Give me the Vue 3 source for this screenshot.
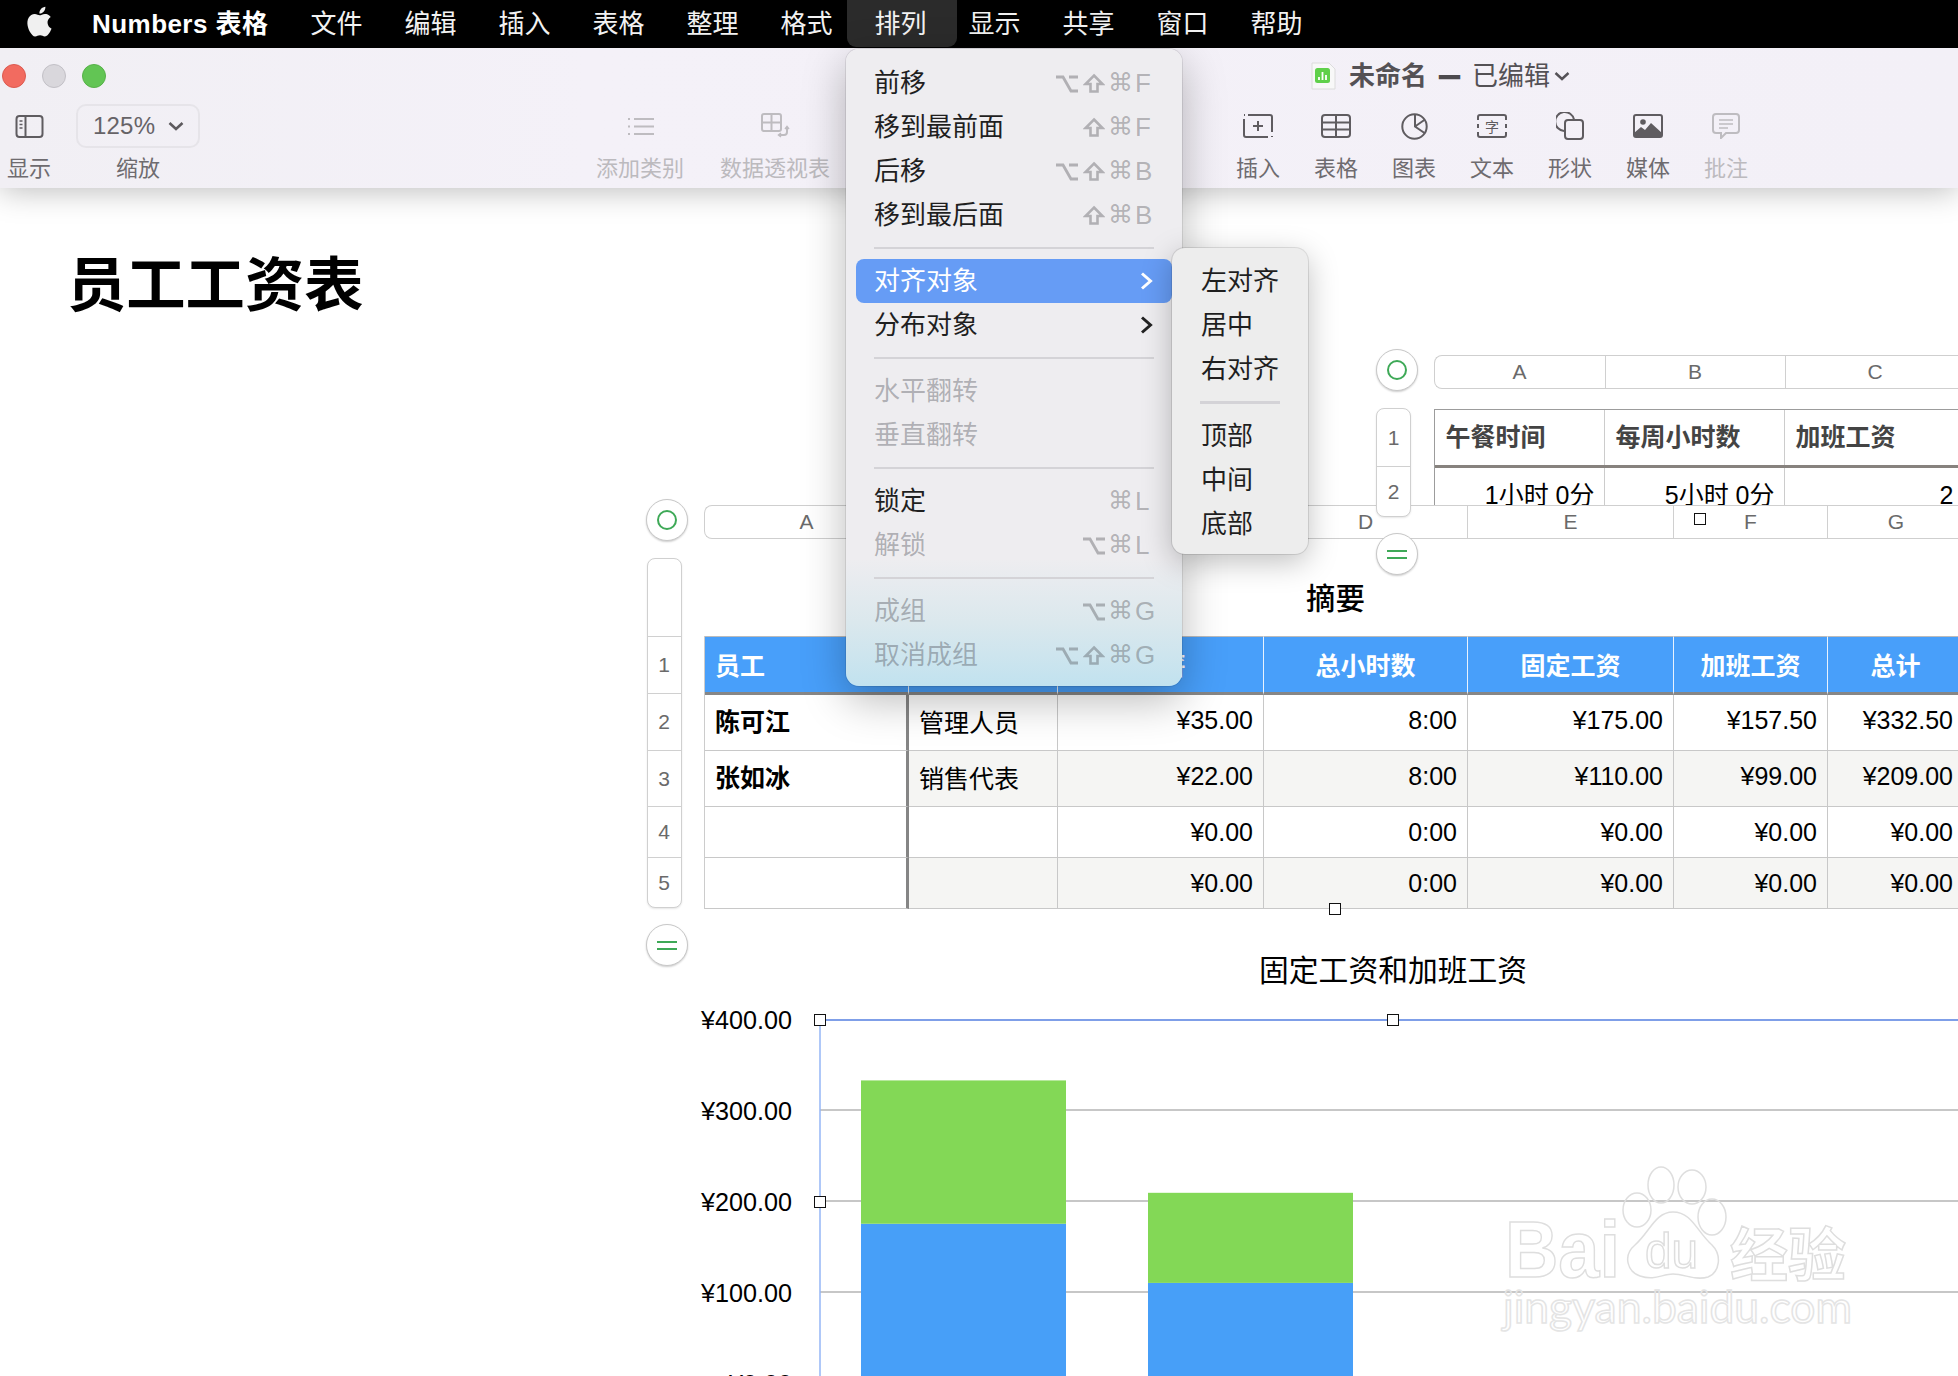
<script setup>
const menus = ['文件','编辑','插入','表格','整理','格式','排列','显示','共享','窗口','帮助']
const arrange = [
  { t:'前移', k:['⌥','⇧','⌘'], l:'F' },
  { t:'移到最前面', k:['⇧','⌘'], l:'F' },
  { t:'后移', k:['⌥','⇧','⌘'], l:'B' },
  { t:'移到最后面', k:['⇧','⌘'], l:'B' },
  { sep:true },
  { t:'对齐对象', sub:true, on:true },
  { t:'分布对象', sub:true },
  { sep:true },
  { t:'水平翻转', dis:true },
  { t:'垂直翻转', dis:true },
  { sep:true },
  { t:'锁定', k:['⌘'], l:'L' },
  { t:'解锁', dis:true, k:['⌥','⌘'], l:'L' },
  { sep:true },
  { t:'成组', dis:true, k:['⌥','⌘'], l:'G' },
  { t:'取消成组', dis:true, k:['⌥','⇧','⌘'], l:'G' }
]
const align = [
  { t:'左对齐' },{ t:'居中' },{ t:'右对齐' },{ sep:true },{ t:'顶部' },{ t:'中间' },{ t:'底部' }
]
const tools = ['插入','表格','图表','文本','形状','媒体','批注']
const mainCols = ['A','B','C','D','E','F','G']
const mainHead = ['员工','','时薪','总小时数','固定工资','加班工资','总计']
const mainRows = [
  ['陈可江','管理人员','¥35.00','8:00','¥175.00','¥157.50','¥332.50'],
  ['张如冰','销售代表','¥22.00','8:00','¥110.00','¥99.00','¥209.00'],
  ['','','¥0.00','0:00','¥0.00','¥0.00','¥0.00'],
  ['','','¥0.00','0:00','¥0.00','¥0.00','¥0.00']
]
const zero = 1383
const yOf = v => zero - v * 0.91
const ticks = [400,300,200,100,0]
const bars = [
  { x:861, fixed:175, over:157.5 },
  { x:1148, fixed:110, over:99 }
]
</script>

<template>
  <div class="app">
    <header class="menubar">
      <svg class="apple" viewBox="3 1.5 18 21.5"><path fill="#f0f0f0" d="M18.71 19.5c-.83 1.24-1.71 2.45-3.05 2.47-1.34.03-1.77-.79-3.29-.79-1.53 0-2 .77-3.27.82-1.31.05-2.3-1.32-3.14-2.53C4.25 17 2.94 12.45 4.7 9.39c.87-1.52 2.43-2.48 4.12-2.51 1.28-.02 2.5.87 3.29.87.78 0 2.26-1.07 3.81-.91.65.03 2.47.26 3.64 1.98-.09.06-2.17 1.28-2.15 3.81.03 3.02 2.65 4.03 2.68 4.04-.03.07-.42 1.44-1.38 2.83M13 3.5c.73-.83 1.94-1.46 2.94-1.5.13 1.17-.34 2.35-1.04 3.19-.69.85-1.83 1.51-2.95 1.42-.15-1.15.41-2.35 1.05-3.11z"/></svg>
      <span class="appname">Numbers 表格</span>
      <span v-for="m in menus" :key="m" class="mi" :class="{ on: m === '排列' }"><span class="mi-t">{{ m }}</span></span>
    </header>

    <section class="chrome">
      <div class="titlerow">
        <i class="light red"></i><i class="light grey"></i><i class="light green"></i>
        <div class="doc">
          <svg class="docicon" viewBox="0 0 25 28">
            <path d="M1 1h17l6 6v20H1z" fill="#f8f8f8" stroke="#dcdcdc"/>
            <rect x="4" y="6" width="15" height="15" rx="2.500" fill="#5fd04a"/>
            <path d="M8 18v-3M11.500 18v-8M15 18v-5" stroke="#fff" stroke-width="1.800"/>
          </svg>
          <b>未命名</b><b class="dash">—</b><span>已编辑</span>
          <svg class="docchev" viewBox="0 0 16 10"><path d="M1.500 2l6.500 6 6.500-6" fill="none" stroke="#555257" stroke-width="2.400"/></svg>
        </div>
      </div>
      <div class="toolrow">
        <div class="tool show">
          <div class="ic"><svg width="29" height="23" viewBox="0 0 28 23" fill="none" stroke="currentColor" stroke-width="2"><rect x="1" y="1" width="26" height="21" rx="3"/><path d="M10 1v21"/><path d="M4 6h3M4 9.500h3M4 13h3" stroke-width="1.500"/></svg></div>
          <span>显示</span>
        </div>
        <div class="tool zoomtool">
          <div class="pill">125%<svg width="16" height="10" viewBox="0 0 16 10"><path d="M1.500 2l6.500 6 6.500-6" fill="none" stroke="#5d5a5e" stroke-width="2.600"/></svg></div>
          <span>缩放</span>
        </div>
        <div class="tool dis addcat">
          <div class="ic"><svg width="27" height="19" viewBox="0 0 27 19" fill="none" stroke="currentColor" stroke-width="2"><path d="M7 2h20M7 9.500h20M7 17h20"/><path d="M1 2h2M1 9.500h2M1 17h2"/></svg></div>
          <span>添加类别</span>
        </div>
        <div class="tool dis pivot">
          <div class="ic"><svg width="29" height="27" viewBox="0 0 29 27" fill="none" stroke="currentColor" stroke-width="2"><rect x="1" y="1" width="19" height="17" rx="2"/><path d="M10.500 1v17M1 9.500h19"/><path d="M26 14v5a3 3 0 0 1-3 3h-5"/><path d="M24 16l2-2.500 2 2.500M20 20l-2.500 2 2.500 2" stroke-width="1.500"/></svg></div>
          <span>数据透视表</span>
        </div>
        <div class="rtools">
          <div v-for="(t,i) in tools" :key="t" class="tool rt" :class="{ dis: i === 6 }">
            <div class="ic">
              <svg v-if="i===0" width="30" height="24" viewBox="0 0 30 24" fill="none" stroke="currentColor" stroke-width="2"><path d="M5 1h22a2 2 0 0 1 2 2v15M25 23H3a2 2 0 0 1-2-2V5"/><path d="M1 1h1M29 22v1"/><path d="M15 7v10M10 12h10"/></svg>
              <svg v-else-if="i===1" width="30" height="24" viewBox="0 0 30 24" fill="none" stroke="currentColor" stroke-width="2"><rect x="1" y="1" width="28" height="22" rx="3"/><path d="M1 8.500h28M1 15.500h28M15 1v22"/></svg>
              <svg v-else-if="i===2" width="27" height="27" viewBox="0 0 27 27" fill="none" stroke="currentColor" stroke-width="2"><circle cx="13.500" cy="13.500" r="12.200"/><path d="M14 1.500v12l9.500 6.500M14 13.500l10-7"/></svg>
              <svg v-else-if="i===3" width="30" height="24" viewBox="0 0 30 24" fill="none" stroke="currentColor" stroke-width="2"><path d="M1 6V3a2 2 0 0 1 2-2h24a2 2 0 0 1 2 2v3M1 18v3a2 2 0 0 0 2 2h24a2 2 0 0 0 2-2v-3M1 10v4M29 10v4"/><text x="15" y="18" text-anchor="middle" class="zi">字</text></svg>
              <svg v-else-if="i===4" width="28" height="28" viewBox="0 0 28 28" fill="none" stroke="currentColor" stroke-width="2"><path d="M8 19A9.500 9.500 0 1 1 18 7.500"/><rect x="9" y="8" width="18" height="19" rx="3"/></svg>
              <svg v-else-if="i===5" width="30" height="24" viewBox="0 0 30 24"><rect x="1" y="1" width="28" height="22" rx="2" fill="none" stroke="currentColor" stroke-width="2"/><circle cx="10" cy="8" r="2.800" fill="currentColor"/><path d="M1 23v-4l7-6 4 3 6-7 11 10v4z" fill="currentColor"/></svg>
              <svg v-else width="28" height="26" viewBox="0 0 28 26" fill="none" stroke="currentColor" stroke-width="2"><path d="M4 1h20a3 3 0 0 1 3 3v13a3 3 0 0 1-3 3H14l-5 5v-5H4a3 3 0 0 1-3-3V4a3 3 0 0 1 3-3z"/><path d="M7 7h14M7 11h14M7 15h9" stroke-width="1.600"/></svg>
            </div>
            <span>{{ t }}</span>
          </div>
        </div>
      </div>
    </section>

    <main class="canvas">
      <h1 class="sheettitle">员工工资表</h1>

      <!-- upper table -->
      <div class="circle c-top1"><i class="ring"></i></div>
      <div class="colstrip cs-top">
        <span style="width:171px">A</span><span style="width:180px">B</span><span style="width:180px">C</span>
      </div>
      <div class="toptable">
        <div class="tt-row tt-head"><b>午餐时间</b><b>每周小时数</b><b>加班工资</b></div>
        <div class="tt-row tt-body"><span>1小时 0分</span><span>5小时 0分</span><span>2</span></div>
      </div>

      <!-- main table -->
      <div class="circle c-main1"><i class="ring"></i></div>
      <div class="colstrip cs-main">
        <span v-for="c in mainCols" :key="c">{{ c }}</span>
      </div>
      <div class="rowstrip rs-main">
        <span class="r0"></span>
        <span class="r1">1</span><span class="r2">2</span><span class="r3">3</span><span class="r4">4</span><span class="r5">5</span>
      </div>
      <div class="circle c-main2"><i class="eq"></i></div>

      <div class="rowstrip rs-top">
        <span class="t1">1</span><span class="t2">2</span>
      </div>
      <div class="circle c-top2"><i class="eq"></i></div>

      <div class="tabletitle">摘要</div>
      <div class="maintable">
        <div v-for="(h,i) in mainHead" :key="'h'+i" class="cell head">{{ h }}</div>
        <template v-for="(r,ri) in mainRows" :key="'r'+ri">
          <div v-for="(v,ci) in r" :key="ci" class="cell" :class="['c'+ci, { alt: ri % 2 === 1 && ci > 0, short: ri > 1 }]">{{ v }}</div>
        </template>
      </div>

      <i class="handle h-a"></i>
      <i class="handle h-b"></i>

      <!-- chart -->
      <div class="charttitle">固定工资和加班工资</div>
      <svg class="chart" width="1958" height="1376" viewBox="0 0 1958 1376">
        <path v-for="t in ticks.slice(1,4)" :key="t" :d="`M820 ${yOf(t)}H1958`" stroke="#b4b4b4" stroke-width="1.500"/>
        <text v-for="t in ticks" :key="'l'+t" x="792" :y="yOf(t) + 10" text-anchor="end" class="axis">¥{{ t }}.00</text>
        <g v-for="b in bars" :key="b.x">
          <rect :x="b.x" :y="yOf(b.fixed)" width="205" :height="b.fixed * 0.91" fill="#479ff8"/>
          <rect :x="b.x" :y="yOf(b.fixed + b.over)" width="205" :height="b.over * 0.91" fill="#83d856"/>
        </g>
        <path d="M820 1020H1958" stroke="#7f9fe8" stroke-width="2"/>
        <path d="M820 1020V1376" stroke="#94b6f6" stroke-width="1.500"/>
        <g class="wm">
          <ellipse cx="1637" cy="1210" rx="14" ry="17"/>
          <ellipse cx="1661" cy="1185" rx="13" ry="18"/>
          <ellipse cx="1692" cy="1187" rx="14" ry="17"/>
          <ellipse cx="1712" cy="1217" rx="14" ry="18"/>
          <path d="M1673 1212C1655 1212 1650 1232 1635 1245C1622 1256 1628 1272 1640 1276C1655 1281 1662 1274 1673 1274C1685 1274 1695 1281 1708 1277C1720 1272 1722 1255 1712 1245C1697 1232 1692 1212 1673 1212Z"/>
          <text x="1505" y="1277" class="wm-bai" textLength="115" lengthAdjust="spacingAndGlyphs">Bai</text>
          <text x="1645" y="1268" class="wm-du" textLength="53" lengthAdjust="spacingAndGlyphs">du</text>
          <text x="1730" y="1276" class="wm-cn">经验</text>
          <text x="1503" y="1323" class="wm-url" textLength="349" lengthAdjust="spacingAndGlyphs">jingyan.baidu.com</text>
        </g>
      </svg>
      <i class="handle h-c"></i>
      <i class="handle h-d"></i>
      <i class="handle h-e"></i>
    </main>

    <!-- dropdown menus -->
    <nav class="menu">
      <template v-for="(it,i) in arrange" :key="i">
        <div v-if="it.sep" class="sep"></div>
        <div v-else class="row" :class="{ on: it.on, dis: it.dis }">
          <span>{{ it.t }}</span>
          <svg v-if="it.sub" class="chev" width="13" height="20" viewBox="0 0 13 20"><path d="M2 2.500l8.500 7.500-8.500 7.500" fill="none" stroke="currentColor" stroke-width="3"/></svg>
          <span v-if="it.k" class="keys">
            <span v-for="k in it.k" :key="k" class="ks">
              <svg v-if="k==='⌥'" width="22" height="19" viewBox="0 0 22 19" fill="none" stroke="currentColor" stroke-width="2.800"><path d="M0 3h7l8 14h7M13 3h9"/></svg>
              <svg v-else-if="k==='⇧'" width="22" height="20" viewBox="0 0 22 20" fill="none" stroke="currentColor" stroke-width="2.600"><path d="M11 2.500l8.500 8.500h-5v7.500h-7V11h-5z"/></svg>
              <template v-else>{{ k }}</template>
            </span>
            <span class="kl">{{ it.l }}</span>
          </span>
        </div>
      </template>
    </nav>
    <nav class="submenu">
      <template v-for="(it,i) in align" :key="i">
        <div v-if="it.sep" class="sep sep-s"></div>
        <div v-else class="srow">{{ it.t }}</div>
      </template>
    </nav>
  </div>
</template>

<style>
html, body { margin: 0; background: #fff; }
</style>

<style scoped>
.app {
  width: 1958px; height: 1376px; overflow: hidden; position: relative;
  display: flex; flex-direction: column; background: #fff;
  font-family: "Liberation Sans", "Noto Sans CJK SC", sans-serif;
}
.menubar {
  height: 48px; flex: none; background: #000; color: #f2f2f2;
  display: flex; align-items: center; gap: 42px; font-size: 26px; line-height: 36px;
  padding-left: 26px; position: relative; z-index: 5;
}
.apple { width: 27px; height: 32px; margin-top: -4px; margin-right: -3px; }
.appname { font-weight: 700; color: #fff; width: 175.500px; white-space: nowrap; margin-right: 1px; letter-spacing: .45px; }
.mi { position: relative; width: 52px; white-space: nowrap; }
.mi-t { position: relative; }
.mi.on::before {
  content: ""; position: absolute; left: -28px; right: -30px; top: -6px; bottom: -5px;
  background: #2b2b2b; border-radius: 0 0 9px 9px;
}
.chrome {
  height: 140px; flex: none; background: linear-gradient(90deg, #f1eff4, #f4f1f8 30%, #f3f0f7);
  position: relative; z-index: 3; box-shadow: 0 2px 30px rgba(0,0,0,.28);
}
.titlerow { height: 56px; display: flex; align-items: center; padding-left: 2px; gap: 16px; }
.light { width: 24px; height: 24px; border-radius: 50%; box-sizing: border-box; display: block; }
.red { background: #f26b60; border: 1px solid #dc5a50; }
.grey { background: #d9d7dc; border: 1px solid #c2c0c6; }
.green { background: #62c554; border: 1px solid #56b148; }
.doc {
  margin-left: 1189px; display: flex; align-items: center; color: #545155; font-size: 26px; line-height: 36px;
}
.docicon { width: 25px; height: 28px; margin-right: 13px; }
.doc b { font-weight: 700; }
.dash { width: 45px; text-align: center; color: #4d4a4e; font-family: "Noto Sans CJK SC", sans-serif; font-size: 22px; transform: translateY(-6px) scale(1.2, 2); }
.docchev { width: 16px; height: 10px; margin-left: 4px; }
.toolrow { height: 84px; display: flex; padding-left: 7px; }
.tool {
  display: flex; flex-direction: column; align-items: center; color: #5f5c60;
  font-size: 22px; line-height: 28px; white-space: nowrap; flex: none;
}
.tool > span { margin-top: 7px; color: #6e6b6f; }
.tool.dis, .tool.dis > span { color: #bcbabe; }
.ic { height: 44px; display: flex; align-items: center; justify-content: center; color: #5f5c60; }
.tool.dis .ic { color: #bebcc0; }
.show { width: 44px; }
.zoomtool { width: 124px; margin-left: 25px; }
.pill {
  box-sizing: border-box; width: 124px; height: 44px; border: 2px solid #e6e4e9; border-radius: 10px;
  display: flex; align-items: center; justify-content: space-between; padding: 0 14px 0 15px;
  font-size: 24px; color: #666367; letter-spacing: .2px;
}
.addcat { width: 88px; margin-left: 396px; }
.pivot { width: 110px; margin-left: 36px; }
.rtools { display: flex; margin-left: 389px; }
.rt { width: 78px; }
.zi { font-size: 14px; fill: currentColor; stroke: none; }

.canvas { flex: 1; position: relative; }
.sheettitle {
  position: absolute; left: 67px; top: 58px; margin: 0; font-size: 59.300px; line-height: 80px; font-weight: 700; color: #000;
}
.circle {
  position: absolute; width: 42px; height: 42px; box-sizing: border-box; border-radius: 50%;
  background: #fff; border: 1.500px solid #c8c8c8; box-shadow: 0 1px 2px rgba(0,0,0,.2);
  display: flex; align-items: center; justify-content: center; z-index: 2;
}
.ring { width: 20px; height: 20px; box-sizing: border-box; border-radius: 50%; border: 2.500px solid #3ea957; }
.eq { width: 20px; height: 9px; box-sizing: border-box; border-top: 2.500px solid #3ea957; border-bottom: 2.500px solid #3ea957; }
.c-top1 { left: 1376px; top: 161px; }
.c-top2 { left: 1376px; top: 345px; }
.c-main1 { left: 646px; top: 311px; }
.c-main2 { left: 646px; top: 736px; }

.colstrip {
  position: absolute; height: 34px; box-sizing: border-box; background: #fff; display: flex;
  border: 1.500px solid #cfcfcf; border-right: 0; border-radius: 8px 0 0 8px;
  font-size: 21px; line-height: 31px; color: #6a6a6a;
}
.colstrip span { text-align: center; border-right: 1px solid #d0d0d0; box-sizing: border-box; flex: none; }
.cs-top { left: 1433.500px; top: 167px; width: 525px; }
.cs-main { left: 704px; top: 317px; width: 1254px; z-index: 1; }
.cs-main span:nth-child(1) { width: 204px; }
.cs-main span:nth-child(2) { width: 149px; }
.cs-main span:nth-child(3) { width: 206px; }
.cs-main span:nth-child(4) { width: 204px; }
.cs-main span:nth-child(5) { width: 206px; }
.cs-main span:nth-child(6) { width: 154px; }
.cs-main span:nth-child(7) { width: 136px; border-right: 0; }

.rowstrip {
  position: absolute; box-sizing: border-box; width: 35px; background: #fff; display: flex; flex-direction: column;
  border: 1.500px solid #d0d0d0; border-radius: 8px; box-shadow: 0 1px 2px rgba(0,0,0,.1);
  font-size: 21px; color: #6a6a6a; text-align: center; z-index: 2;
}
.rowstrip span { display: flex; align-items: center; justify-content: center; border-bottom: 1px solid #d0d0d0; box-sizing: border-box; flex: none; }
.rowstrip span:last-child { border-bottom: 0; }
.rs-main { left: 646.500px; top: 370px; height: 350px; }
.r0 { height: 78px; } .r1 { height: 57px; } .r2 { height: 57px; } .r3 { height: 56px; } .r4 { height: 51px; } .r5 { flex: 1 !important; }
.rs-top { left: 1376px; top: 220px; height: 109px; }
.t1 { height: 58px; } .t2 { flex: 1 !important; }

.toptable {
  position: absolute; left: 1433.500px; top: 221px; width: 525px; height: 96px; overflow: hidden;
  box-sizing: border-box; border-top: 1.500px solid #9c9c9c; border-left: 1.500px solid #9c9c9c; background: #fff;
}
.tt-row { display: grid; grid-template-columns: 170px 180px 180px; font-size: 25px; box-sizing: border-box; }
.tt-row > * { border-right: 1px solid #ccc; box-sizing: border-box; }
.tt-head { height: 58px; border-bottom: 3px solid #87827e; line-height: 55px; color: #444; }
.tt-head b { padding-left: 11px; font-weight: 700; }
.tt-body { height: 60px; color: #000; line-height: 54px; text-align: right; }
.tt-body span { padding-right: 9px; }
.tt-body span:last-child { padding-right: 10px; }

.tabletitle, .charttitle { position: absolute; white-space: nowrap; font-size: 29.800px; line-height: 40px; color: #000; }
.tabletitle { left: 1306px; top: 391px; font-weight: 500; font-size: 29.500px; }
.charttitle { left: 1259px; top: 763px; }

.maintable {
  position: absolute; left: 704px; top: 448px; width: 1259px; box-sizing: border-box; z-index: 0;
  display: grid; grid-template-columns: 204px 149px 206px 204px 206px 154px 136px;
  grid-template-rows: 59px 56px 56px 51px 51px;
  border-left: 1.500px solid #ccc;
  font-size: 25px; color: #000;
}
.cell {
  box-sizing: border-box; border-right: 1px solid #c8c8c8; border-bottom: 1.500px solid #c8c8c8;
  display: flex; align-items: center; justify-content: flex-end; padding-right: 10px; padding-bottom: 4px; white-space: nowrap;
}
.cell.short { padding-bottom: 0; }
.head {
  background: #489ffa; color: #fff; font-weight: 700; justify-content: center; padding: 0 0 2px;
  border-right: 1.500px solid #e8f2fe; border-bottom: 3px solid #868686; border-top: 1px solid #bbb;
}
.head:first-child { justify-content: flex-start; padding-left: 10px; }
.c0 { justify-content: flex-start; padding: 0 0 5px 10px; font-weight: 700; border-right: 3px solid #858585; }
.c1 { justify-content: flex-start; padding: 0 0 4px 10px; }
.alt { background: #f5f5f3; }

.handle { position: absolute; width: 12px; height: 12px; box-sizing: border-box; border: 1.500px solid #111; background: #fff; z-index: 2; display: block; }
.h-a { left: 1694px; top: 325px; }
.h-b { left: 1329px; top: 715px; }
.h-c { left: 814px; top: 826px; }
.h-d { left: 1387px; top: 826px; }
.h-e { left: 814px; top: 1008px; }

.chart { position: absolute; left: 0; top: -188px; z-index: 0; pointer-events: none; }
.axis { font-size: 25.200px; fill: #000; font-family: "Liberation Sans", sans-serif; }
.wm { fill: none; stroke: #dedede; stroke-width: 1.500; }
.wm-bai { font-size: 80px; font-weight: 700; font-family: "Liberation Sans", sans-serif; }
.wm-du { font-size: 50px; font-family: "Liberation Sans", sans-serif; }
.wm-cn { font-size: 58px; font-weight: 700; font-family: "Noto Sans CJK SC", sans-serif; }
.wm-url { font-size: 44px; font-family: "Lato", sans-serif; stroke: #e4e4e4; }

.menu {
  position: absolute; left: 846px; top: 49px; width: 336px; height: 637px; box-sizing: border-box; z-index: 6;
  border-radius: 13px; padding: 12px 10px 0;
  background: linear-gradient(180deg, #eeedf0 0, #eeedf0 80%, #dbe8ed 90%, #c1e2ef 100%);
  box-shadow: 0 0 0 1px rgba(0,0,0,.09), 0 14px 44px rgba(0,0,0,.28);
  font-size: 26px; color: #1f1f1f;
}
.row {
  height: 44px; display: flex; align-items: center; justify-content: space-between; line-height: 44px;
  padding: 0 17px 0 18px; box-sizing: border-box; border-radius: 8px; white-space: nowrap;
}
.row.on { background: #669cf5; color: #fff; }
.row.dis { color: rgba(60,60,70,.36); }
.chev { color: #222; margin-right: 2px; }
.row.on .chev { color: #fff; }
.keys { display: flex; align-items: center; color: rgba(70,70,75,.36); }
.ks { width: 27px; height: 30px; display: flex; align-items: center; justify-content: center; font-family: "DejaVu Sans", sans-serif; font-size: 25px; line-height: 30px; }
.kl { width: 20px; margin-left: 1px; text-align: left; font-size: 26px; line-height: 30px; }
.sep { height: 2.500px; background: #d4d3d7; margin: 9.750px 18px; }
.submenu {
  position: absolute; left: 1172px; top: 248px; width: 136px; height: 306px; box-sizing: border-box; z-index: 7;
  border-radius: 13px; padding: 11px 0 0 29px; background: #ededed;
  box-shadow: 0 0 0 1px rgba(0,0,0,.1), 0 8px 30px rgba(0,0,0,.25);
  font-size: 26px; color: #1f1f1f;
}
.srow { height: 44px; line-height: 44px; white-space: nowrap; }
.sep-s { height: 2.500px; width: 80px; margin: 10px 0 10px -1px; }
</style>
